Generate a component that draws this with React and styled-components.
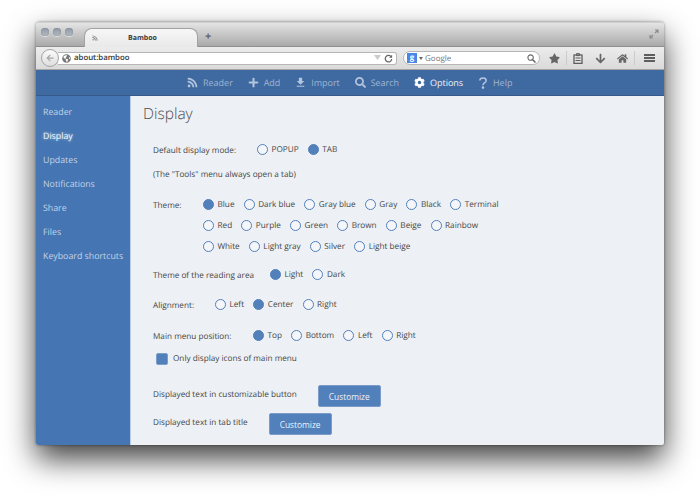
import React from "react";
import styled, { createGlobalStyle } from "styled-components";
import { FaRss, FaPlus, FaSearch, FaCog, FaStar, FaArrowDown, FaHome, FaGlobeAmericas, FaArrowLeft } from "react-icons/fa";
import { MdFileDownload } from "react-icons/md";

const Global = createGlobalStyle`
  html, body { margin: 0; padding: 0; background: #fff; }
  body { width: 700px; height: 495px; overflow: hidden; font-family: "Open Sans", "Liberation Sans", sans-serif; text-rendering: geometricPrecision; }
`;
const Frame = styled.div`padding: 22px 36px 0;`;
const Window = styled.div`
  width: 628px; height: 423px; border-radius: 4px 4px 2px 2px; overflow: hidden;
  display: flex; flex-direction: column;
  box-shadow: 0 14px 30px rgba(0,0,0,.75), 0 0 3px rgba(0,0,0,.45);
  background: #edf0f4;
`;
const TabBar = styled.div`
  height: 25px; flex: none; display: flex; align-items: flex-end; gap: 0; padding-left: 5px; box-sizing: border-box;
  background: linear-gradient(#e4e4e4, #a9a9a9); border-top: 1px solid #cfcfcf; border-bottom: 1px solid #8f8f8f;
  position: relative;
`;
const Lights = styled.div`display: flex; gap: 4px; align-self: flex-start; margin-top: 5px; margin-right: 11px;`;
const Light = styled.span`width: 8px; height: 8px; border-radius: 50%; background: linear-gradient(#8d98a5, #b4bac2); box-shadow: inset 0 0 1px #5c6670, 0 1px 0 rgba(255,255,255,.5);`;
const Tab = styled.div`
  width: 114px; height: 19px; box-sizing: border-box; margin-bottom: -1px; padding-left: 7px;
  display: flex; align-items: center;
  background: linear-gradient(#f7f7f7, #e9e9e9); border: 1px solid #a2a2a2; border-bottom: 0;
  border-radius: 8px 8px 0 0; font-size: 7px; font-weight: 700; color: #3b3b3b;
`;
const TabTitle = styled.span`flex: 1; text-align: center; padding-right: 10px;`;
const NewTab = styled.span`margin: 0 0 3px 7px; font-size: 11px; line-height: 12px; color: #666; font-weight: 700;`;
const Resize = styled.svg`position: absolute; right: 5px; top: 6px;`;
const NavBar = styled.div`
  height: 23px; flex: none; box-sizing: border-box; display: flex; align-items: center; padding: 0 5px 0 5px;
  background: linear-gradient(#ececec, #dadada); border-bottom: 1px solid #a5a5a5;
`;
const BackBtn = styled.div`
  width: 18px; height: 18px; border-radius: 50%; border: 1px solid #a4a4a4; background: linear-gradient(#fbfbfb, #dedede);
  display: flex; align-items: center; justify-content: center; color: #a6a6a6; font-size: 8px; flex: none; box-sizing: border-box; margin-right: -1px; z-index: 1;
`;
const Url = styled.div`
  width: 339px; height: 13px; box-sizing: border-box; display: flex; align-items: center; gap: 3px; padding: 0 3px 0 4px;
  background: #fff; border: 1px solid #b6b6b6; border-left: 0; border-radius: 0 3px 3px 0;
  font-size: 7.8px; font-weight: 600; color: #333; flex: none;
`;
const UrlText = styled.span`flex: 1;`;
const Search = styled.div`
  width: 137px; height: 14px; box-sizing: border-box; margin-left: 6px; display: flex; align-items: center; gap: 2px; padding: 0 3px 0 3px;
  background: #fff; border: 1px solid #b6b6b6; border-radius: 7px; font-size: 8px; color: #777; flex: none;
`;
const GBadge = styled.span`width: 10px; height: 10px; background: #4a86e8; color: #fff; font-size: 8px; font-weight: 700; text-align: center; line-height: 9px;`;
const Caret = styled.span`width: 0; height: 0; border: 2px solid transparent; border-top: 3px solid #666; margin-top: 2px;`;
const SearchText = styled.span`flex: 1;`;
const Tools = styled.div`display: flex; align-items: center; margin-left: 3px; gap: 0; color: #666;`;
const ToolIcon = styled.span`width: 22.5px; display: flex; justify-content: center; font-size: 11px;`;
const Sep = styled.span`width: 1px; height: 14px; background: #cbcbcb;`;
const Burger = styled.span`width: 11px; height: 8px; box-sizing: border-box; margin-left: 9px; border-top: 2px solid #5e5e5e; border-bottom: 2px solid #5e5e5e; position: relative;
  &::after { content: ""; position: absolute; left: 0; right: 0; top: 1px; height: 2px; background: #5e5e5e; }`;
const MainMenu = styled.nav`
  height: 26px; flex: none; box-sizing: border-box; background: #3f6aa1; border-bottom: 1px solid #34598a;
  display: flex; align-items: center; padding-left: 151px; gap: 14.8px;
`;
const MenuItem = styled.a`
  display: flex; align-items: center; gap: 5px; font-size: 9px; color: ${p => p.$active ? "#eef2f7" : "#9fb5d2"};
  svg { font-size: 11px; color: ${p => p.$active ? "#fff" : "#b3c5dc"}; }
`;
const ImportIcon = styled(MdFileDownload)`font-size: 13px !important; margin: 0 -1px;`;
const HelpIcon = styled.svg`width: 10px; height: 12px; fill: none; stroke: #b3c5dc; stroke-width: 1.5;`;
const Body = styled.div`flex: 1; display: flex; min-height: 0;`;
const Side = styled.aside`
  width: 95px; flex: none; box-sizing: border-box; background: #4576b3; padding-top: 4px; border-right: 1px solid #b9cde6;
`;
const SideItem = styled.div`
  height: 24px; line-height: 24px; padding-left: 7px; font-size: 8.8px; white-space: nowrap;
  color: ${p => p.$active ? "#f4f7fb" : "#c3d3e8"};
  text-shadow: ${p => p.$active ? "0 0 3px rgba(255,255,255,.7)" : "none"};
`;
const Content = styled.main`flex: 1; padding: 5px 0 0 12px; color: #464646; font-size: 8.2px;`;
const Title = styled.h1`margin: 0 0 18px; font-size: 15.5px; line-height: 24px; font-weight: 300; color: #4c4c4c;`;
const Form = styled.div`padding-left: 10px;`;
const Row = styled.div`display: flex; align-items: flex-start; margin-top: ${p => p.$mt || 0}px;`;
const Label = styled.span`width: ${p => p.$w}px; flex: none; line-height: 14px; padding-top: 1px;`;
const Lines = styled.div`display: flex; flex-direction: column; gap: 7px;`;
const Line = styled.div`display: flex; gap: 9.2px;`;
const Option = styled.span`display: flex; align-items: center; gap: 3.5px; line-height: 14px; white-space: nowrap;`;
const Dot = styled.span`
  width: 11px; height: 11px; border-radius: 50%; box-sizing: border-box; flex: none; margin-bottom: 2px;
  border: 1.5px solid #5280bb; background: ${p => p.$on ? "#5280bb" : "#f4f6f9"};
`;
const Note = styled.div`margin-top: 10px; line-height: 14px;`;
const CheckRow = styled.div`display: flex; align-items: center; gap: 5px; margin: 8px 0 0 3px; line-height: 14px;`;
const Box = styled.span`width: 10px; height: 10px; background: #5280bb; border-radius: 2px; border: 1px solid #7b9ecb;`;
const BtnRow = styled.div`display: flex; align-items: center; gap: ${p => p.$gap}px; margin-top: ${p => p.$mt}px;`;
const Btn = styled.button`
  width: 63px; height: 22px; padding: 0; border: 1px solid #7a9bc8; border-radius: 2px; background: #5280bb;
  color: #eef3f9; font: 400 8.4px "Open Sans", sans-serif; margin-top: 4px;
`;

const opts = (names, on) => names.map(n => <Option key={n}><Dot $on={n === on} />{n}</Option>);

export default function App() {
  return (
    <Frame>
      <Global />
      <Window>
        <TabBar>
          <Lights><Light /><Light /><Light /></Lights>
          <Tab><FaRss size={6} color="#888" /><TabTitle>Bamboo</TabTitle></Tab>
          <NewTab>+</NewTab>
          <Resize width="10" height="10" viewBox="0 0 10 10"><path d="M6 1h3v3M9 1L6 4M1 6v3h3M1 9l3-3" stroke="#8c8c8c" strokeWidth="1.2" fill="none" /></Resize>
        </TabBar>
        <NavBar>
          <BackBtn><FaArrowLeft /></BackBtn>
          <Url>
            <FaGlobeAmericas size={9} color="#777" />
            <UrlText>about:bamboo</UrlText>
            <svg width="7" height="6" viewBox="0 0 7 6"><path d="M0 0h7L3.5 5z" fill="#ccc" /></svg>
            <svg width="9" height="9" viewBox="0 0 10 10"><path d="M8 3.2A3.6 3.6 0 1 0 8.6 5.6" stroke="#666" strokeWidth="1.4" fill="none" /><path d="M9 .8v3.4H5.6z" fill="#666" /></svg>
          </Url>
          <Search>
            <GBadge>g</GBadge><Caret />
            <SearchText>Google</SearchText>
            <svg width="9" height="9" viewBox="0 0 10 10"><circle cx="4" cy="4" r="3" stroke="#666" strokeWidth="1.2" fill="none" /><path d="M6.3 6.3L9.4 9.4" stroke="#666" strokeWidth="1.7" /></svg>
          </Search>
          <Tools>
            <ToolIcon><FaStar /></ToolIcon>
            <Sep />
            <ToolIcon><svg width="10" height="11" viewBox="0 0 10 11"><rect x="1" y="2" width="8" height="8.4" fill="none" stroke="#5e5e5e" strokeWidth="1.3" /><path d="M3.5 .6h3v2h-3zM2.5 5h5M2.5 7.5h5" stroke="#5e5e5e" fill="none" /></svg></ToolIcon>
            <ToolIcon><FaArrowDown /></ToolIcon>
            <ToolIcon><FaHome /></ToolIcon>
            <Sep />
            <Burger />
          </Tools>
        </NavBar>
        <MainMenu>
          <MenuItem><FaRss />Reader</MenuItem>
          <MenuItem><FaPlus />Add</MenuItem>
          <MenuItem><ImportIcon />Import</MenuItem>
          <MenuItem><FaSearch />Search</MenuItem>
          <MenuItem $active><FaCog />Options</MenuItem>
          <MenuItem><HelpIcon viewBox="0 0 10 12"><path d="M1.8 3.6C1.8 2 3.2 1 5 1c1.9 0 3.2 1 3.2 2.7C8.2 5.8 5 5.7 5 8.2" /><circle cx="5" cy="10.6" r=".6" /></HelpIcon>Help</MenuItem>
        </MainMenu>
        <Body>
          <Side>
            <SideItem>Reader</SideItem>
            <SideItem $active>Display</SideItem>
            <SideItem>Updates</SideItem>
            <SideItem>Notifications</SideItem>
            <SideItem>Share</SideItem>
            <SideItem>Files</SideItem>
            <SideItem>Keyboard shortcuts</SideItem>
          </Side>
          <Content>
            <Title>Display</Title>
            <Form>
              <Row>
                <Label $w={104}>Default display mode:</Label>
                <Line>{opts(["POPUP", "TAB"], "TAB")}</Line>
              </Row>
              <Note>(The "Tools" menu always open a tab)</Note>
              <Row $mt={16}>
                <Label $w={50}>Theme:</Label>
                <Lines>
                  <Line>{opts(["Blue", "Dark blue", "Gray blue", "Gray", "Black", "Terminal"], "Blue")}</Line>
                  <Line>{opts(["Red", "Purple", "Green", "Brown", "Beige", "Rainbow"])}</Line>
                  <Line>{opts(["White", "Light gray", "Silver", "Light beige"])}</Line>
                </Lines>
              </Row>
              <Row $mt={14}>
                <Label $w={117}>Theme of the reading area</Label>
                <Line>{opts(["Light", "Dark"], "Light")}</Line>
              </Row>
              <Row $mt={15}>
                <Label $w={62}>Alignment:</Label>
                <Line>{opts(["Left", "Center", "Right"], "Center")}</Line>
              </Row>
              <Row $mt={16}>
                <Label $w={100}>Main menu position:</Label>
                <Line>{opts(["Top", "Bottom", "Left", "Right"], "Top")}</Line>
              </Row>
              <CheckRow><Box />Only display icons of main menu</CheckRow>
              <BtnRow $gap={21} $mt={15}><span>Displayed text in customizable button</span><Btn>Customize</Btn></BtnRow>
              <BtnRow $gap={21} $mt={2}><span>Displayed text in tab title</span><Btn>Customize</Btn></BtnRow>
            </Form>
          </Content>
        </Body>
      </Window>
    </Frame>
  );
}
